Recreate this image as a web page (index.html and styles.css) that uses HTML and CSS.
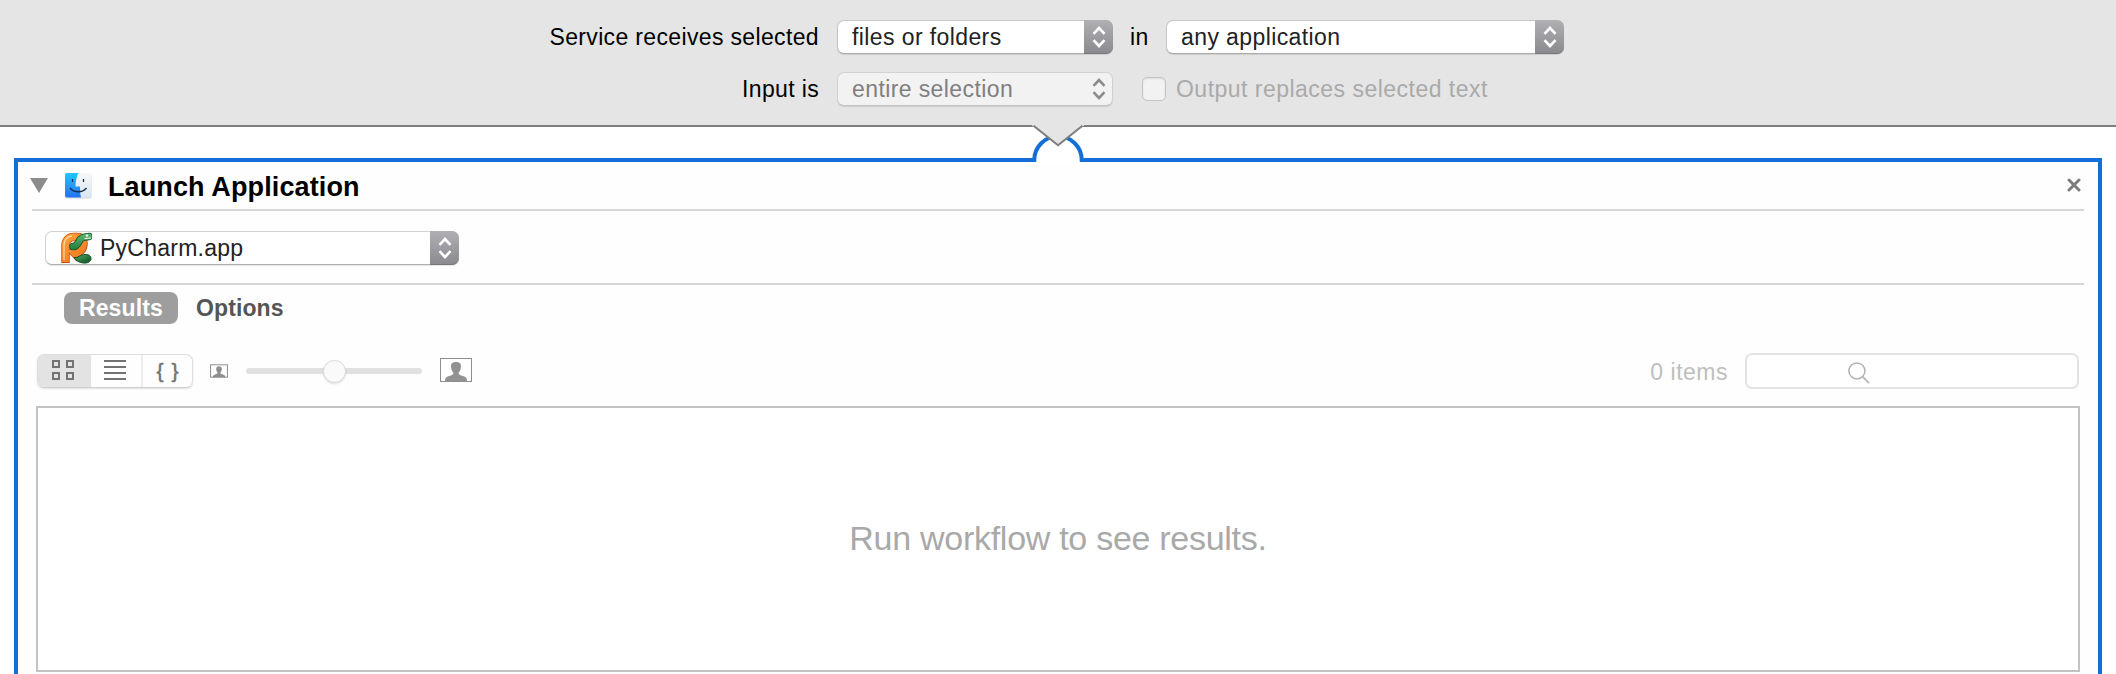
FILE: index.html
```html
<!DOCTYPE html>
<html lang="en">
<head>
<meta charset="utf-8">
<title>Launch Application</title>
<link rel="stylesheet" href="styles.css">
</head>
<body>
<header class="service">
  <div class="row">
    <span class="label">Service receives selected</span>
    <div class="popup popup-type"><span class="value">files or folders</span><span class="cap"><svg width="14" height="22" viewBox="0 0 14 22"><path d="M1.5 7.8 7 2l5.500 5.800M1.500 14.200 7 20l5.500-5.800"/></svg></span></div>
    <span class="in">in</span>
    <div class="popup popup-app"><span class="value">any application</span><span class="cap"><svg width="14" height="22" viewBox="0 0 14 22"><path d="M1.5 7.8 7 2l5.500 5.800M1.500 14.200 7 20l5.500-5.800"/></svg></span></div>
  </div>
  <div class="row">
    <span class="label">Input is</span>
    <div class="popup popup-type disabled"><span class="value">entire selection</span><span class="cap"><svg width="14" height="22" viewBox="0 0 14 22"><path d="M1.5 7.8 7 2l5.500 5.800M1.500 14.200 7 20l5.500-5.800"/></svg></span></div>
    <span class="check"></span>
    <span class="check-label">Output replaces selected text</span>
  </div>
</header>
<main class="action">
  <svg class="connector" width="56" height="40" viewBox="0 0 56 40">
    <path d="M4 33h48v6H4z" fill="#fff"/>
    <path d="M4.300 37v-2a23.700 23.700 0 0 1 47.400 0v2" fill="#fff" stroke="#136fd7" stroke-width="4"/>
    <path d="M2 0h52v.5L28 20.500 2 .5z" fill="#e5e5e5"/>
    <path d="M3.500.7 28 20.300 52.500.7" fill="none" stroke="#7f7f7f" stroke-width="2"/>
  </svg>
  <div class="title-bar">
    <svg class="disclosure" width="18" height="15" viewBox="0 0 18 15"><path d="M0 0h18L9 15z" fill="#8c8c8c"/></svg>
    <svg class="finder" width="28" height="28" viewBox="0 0 28 28">
      <defs>
        <linearGradient id="fb" x2="0" y2="1"><stop stop-color="#25c5fb"/><stop offset="1" stop-color="#2472f2"/></linearGradient>
        <linearGradient id="fw" x2="0" y2="1"><stop stop-color="#f8f8f9"/><stop offset="1" stop-color="#d9e6f3"/></linearGradient>
      </defs>
      <rect x="1" y="2" width="26.500" height="24.500" rx="2" fill="#d5d5d5"/>
      <rect x="1" y="1" width="26.500" height="24.500" rx="2" fill="url(#fw)"/>
      <path d="M3 1h11.500c-2 4-3 8.500-3 13.500h4.500c0 4 .2 7.500 1 11H3a2 2 0 0 1-2-2V3a2 2 0 0 1 2-2z" fill="url(#fb)"/>
      <path d="M8.500 7v3M19.500 7v3M6 16c4 5 12.500 5 16.500 0" fill="none" stroke="#17304d" stroke-width="1.300"/>
    </svg>
    <h1>Launch Application</h1>
    <svg class="close" width="14" height="14" viewBox="0 0 14 14"><path d="M2 2l10 10M12 2L2 12" stroke="#7c7c7c" stroke-width="3" stroke-linecap="round"/></svg>
  </div>
  <div class="app-row">
    <div class="popup popup-target">
      <svg class="pycharm" width="32" height="32" viewBox="0 0 32 32">
        <defs>
          <linearGradient id="po" gradientUnits="userSpaceOnUse" x1="2" y1="2" x2="26" y2="30"><stop stop-color="#ffa640"/><stop offset="1" stop-color="#f2701c"/></linearGradient>
          <linearGradient id="pg" gradientUnits="userSpaceOnUse" x1="0" y1="2" x2="0" y2="18"><stop stop-color="#5fb56f"/><stop offset="1" stop-color="#227a3e"/></linearGradient>
          <linearGradient id="pt" x2="1" y2="1"><stop stop-color="#4fae62"/><stop offset="1" stop-color="#0f4a22"/></linearGradient>
        </defs>
        <g fill="none" stroke-linecap="butt">
          <path d="M5.500 31V14C5.500 8 9 5 14 5h4c4 0 6 3 5.500 7.500C23 18 20 20.500 14.500 21c2 2 3 3.500 5 5.500" stroke="#c4540f" stroke-width="8.500"/>
          <path d="M5.500 30V14C5.500 8 9 5 14 5h4c4 0 6 3 5.500 7.500C23 18 20 20.500 14.500 21c2 2 3 3.500 5 5.500" stroke="url(#po)" stroke-width="6.800"/>
          <path d="M4 28V14c0-6 3-9.500 8-10" stroke="#ffd59a" stroke-width="1.300"/>
          <path d="M13 14.500c3 0 4.500-2 6-5C20.500 6 23 5 29 4.500" stroke="#14532a" stroke-width="7.500" stroke-linecap="round"/>
          <path d="M13 14.500c3 0 4.500-2 6-5C20.500 6 23 5 28.800 4.500" stroke="url(#pg)" stroke-width="6" stroke-linecap="round"/>
        </g>
        <path d="M14 25.500c3 .8 5-1.500 8-2.500 4-1.200 9-.5 9 3.500 0 3.500-4 5-8 4.500-4-.5-7.500-2.500-9-5.500z" fill="url(#pt)" stroke="#14532a"/>
        <path d="M24.500 6.500 31 6" stroke="#fff" stroke-width="1"/>
        <circle cx="27" cy="3.600" r="1.200" fill="#fff"/>
      </svg>
      <span class="value">PyCharm.app</span><span class="cap"><svg width="14" height="22" viewBox="0 0 14 22"><path d="M1.5 7.8 7 2l5.500 5.800M1.500 14.200 7 20l5.500-5.800"/></svg></span>
    </div>
  </div>
  <nav class="tabs"><span class="tab active">Results</span><span class="tab">Options</span></nav>
  <div class="toolbar">
    <div class="segments">
      <span class="seg on"><svg width="22" height="21" viewBox="0 0 22 21"><path d="M1 1h6v6H1zM15 1h6v6h-6zM1 13h6v6H1zM15 13h6v6h-6z" fill="none" stroke="#737373" stroke-width="2"/></svg></span>
      <span class="seg list"><svg width="22" height="21" viewBox="0 0 22 21"><path d="M0 1h22M0 7h22M0 13h22M0 19h22" stroke="#737373" stroke-width="2"/></svg></span>
      <span class="seg braces">{&hairsp;}</span>
    </div>
    <svg class="thumb-small" width="18" height="14" viewBox="0 0 32 24"><rect x="1" y="1" width="30" height="22" fill="#fff" stroke="#8e8e8e" stroke-width="1.800"/><path d="M5 23c0-3 1-4 4-5 3-.8 4.500-1.200 4.500-3-1.500-2-2.500-4-2.500-7 0-3 2-4.500 5-4.500s5 1.500 5 4.500-1 5-2.500 7c0 1.800 1.500 2.200 4.500 3 3 1 4 2 4 5z" fill="#8e8e8e"/></svg>
    <div class="slider"><span class="knob"></span></div>
    <svg class="thumb-large" width="32" height="24" viewBox="0 0 32 24"><rect x=".5" y=".5" width="31" height="23" fill="#fff" stroke="#8e8e8e"/><path d="M5 23c0-3 1-4 4-5 3-.8 4.500-1.200 4.500-3-1.500-2-2.500-4-2.500-7 0-3 2-4 5-4s5 1 5 4-1 5-2.500 7c0 1.800 1.500 2.200 4.500 3 3 1 4 2 4 5z" fill="#929292"/></svg>
    <span class="count">0 items</span>
    <div class="search"><svg width="22" height="22" viewBox="0 0 22 22"><g fill="none" stroke="#b2b2b2" stroke-width="1.500"><circle cx="8.900" cy="8.900" r="8"/><path d="M14.600 14.600l6.500 6.500"/></g></svg></div>
  </div>
  <section class="results">Run workflow to see results.</section>
</main>
</body>
</html>
```
FILE: styles.css
```css
* { box-sizing: border-box; }
html, body { margin: 0; height: 674px; overflow: hidden; }
body {
  background: #fff;
  color: #000;
  font: 23px/34px "Liberation Sans", Arial, sans-serif;
  letter-spacing: .35px;
}
svg { display: block; flex: none; }
span, h1 { white-space: nowrap; }

/* Service header */
.service {
  height: 127px;
  padding-top: 20px;
  display: flex;
  flex-direction: column;
  gap: 18px;
  background: #e5e5e5;
  border-bottom: 2px solid #7f7f7f;
}
.row { display: flex; align-items: center; height: 34px; }
.label { width: 819px; text-align: right; margin-right: 18px; }
.in { margin: 0 17px 0 17px; width: 19px; }

.popup {
  display: flex;
  height: 34px;
  border: 1px solid #c6c6c6;
  border-bottom-color: #aaa;
  border-radius: 7px;
  background: #fff;
  color: #222;
  box-shadow: 0 1px 1px rgba(0, 0, 0, .1);
}
.popup .value { flex: 1; padding-left: 14px; line-height: 32px; letter-spacing: .4px; }
.cap {
  width: 29px;
  margin: -1px -1px -1px 0;
  display: flex;
  align-items: center;
  justify-content: center;
  border-radius: 0 7px 7px 0;
  background: linear-gradient(#b0afb4, #8b8a8f);
  border-bottom: 1px solid #77767b;
}
.cap path { fill: none; stroke: #fff; stroke-width: 2.6; }
.popup-type { width: 276px; }
.popup-app { width: 398px; }
.disabled { background: #f2f2f2; border-color: #d2d2d2; border-bottom-color: #c3c3c3; color: #7f7f7f; }
.disabled .cap { background: none; border-bottom-color: transparent; }
.disabled .cap path { stroke: #8c8c8c; }
.check {
  width: 24px;
  height: 24px;
  margin: 0 10px 0 29px;
  border: 1px solid #c4c4c4;
  border-radius: 5px;
  background: #f2f2f2;
  box-shadow: inset 0 1px 2px rgba(0, 0, 0, .1);
}
.check-label { color: #aaa; letter-spacing: .48px; }

/* Action panel */
.action {
  position: relative;
  height: 540px;
  margin: 31px 14px 0;
  border: 4px solid #136fd7;
  border-bottom: 0;
  background: #fefefe;
}
.connector { position: absolute; left: 1012px; top: -37px; }
.title-bar {
  display: flex;
  align-items: center;
  height: 49px;
  margin: 0 14px;
  border-bottom: 2px solid #d7d7d7;
}
.disclosure { margin-left: -2px; }
.finder { margin: 0 16px 0 16px; }
.title-bar h1 { margin: 0; padding-top: 2px; font-size: 27px; letter-spacing: .12px; }
.close { margin: -1px 3px 0 auto; }
.app-row { height: 74px; margin: 0 14px; padding: 20px 13px 0; border-bottom: 2px solid #d7d7d7; }
.popup-target { width: 414px; border-color: #d2d2d2; border-bottom-color: #b0b0b0; }
.pycharm { margin-left: 14px; }
.popup-target .value { padding-left: 8px; letter-spacing: .25px; }
.tabs { display: flex; gap: 2px; padding: 7px 0 0 46px; }
.tab { height: 32px; padding: 0 16px; border-radius: 8px; font-weight: bold; line-height: 32px; letter-spacing: .1px; color: #555; }
.tab.active { width: 114px; padding-left: 15px; background: #9e9e9e; color: #fff; }
.toolbar { display: flex; align-items: center; height: 36px; margin: 29px 19px 0; }
.segments {
  display: flex;
  width: 156px;
  height: 34px;
  overflow: hidden;
  border: 1px solid #dedede;
  border-bottom-color: #cfcfcf;
  border-radius: 7px;
  box-shadow: 0 1px 2px rgba(0, 0, 0, .12);
}
.seg { flex: 1; display: flex; align-items: center; justify-content: center; padding-bottom: 1px; }
.seg.on { flex: none; width: 53px; padding-right: 3px; background: #e3e3e3; }
.seg.list { flex: none; width: 50px; padding-right: 2px; }
.braces { border-left: 2px solid #ececec; color: #737373; font-size: 21px; letter-spacing: 3px; padding-left: 3px; line-height: 30px; -webkit-text-stroke: .5px #737373; }
.thumb-small { margin: 0 18px 0 17px; }
.slider { display: flex; align-items: center; justify-content: center; width: 176px; height: 6px; border-radius: 3px; background: #e1e1e1; }
.knob { width: 23px; height: 23px; flex: none; border-radius: 50%; background: #fafafa; border: 1px solid #dadada; box-shadow: 0 1px 2px rgba(0, 0, 0, .12); }
.thumb-large { margin-left: 18px; margin-top: -2px; }
.count { margin: 1px 17px 0 auto; color: #bfbfbf; letter-spacing: .5px; }
.search { width: 334px; height: 36px; padding: 7px 0 0 101px; border: 2px solid #e3e3e3; border-radius: 7px; background: #fff; }
.results {
  display: flex;
  align-items: center;
  justify-content: center;
  height: 266px;
  margin: 17px 18px 0;
  padding-bottom: 2px;
  border: 2px solid #c3c3c3;
  background: #fff;
  color: #a9a9a9;
  font-size: 34px;
  letter-spacing: -.28px;
}
```
